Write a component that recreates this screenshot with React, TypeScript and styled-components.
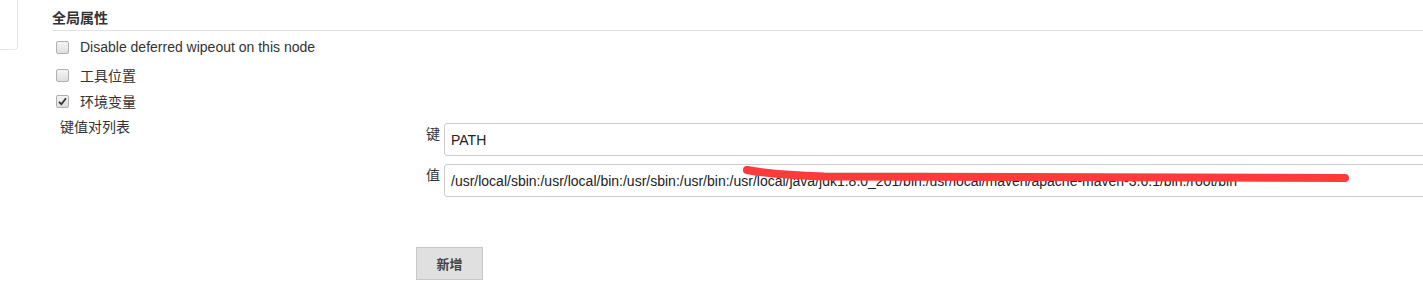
import styled, { createGlobalStyle } from "styled-components";

const GlobalStyle = createGlobalStyle`
  body {
    margin: 0;
    overflow: hidden;
    background: #fff;
    color: #333;
    font-family: "Liberation Sans", Arial, "Noto Sans CJK SC", sans-serif;
    font-size: 13px;
  }
`;

const Page = styled.div`
  display: flex;
  width: 1480px;
`;

const SideStub = styled.div`
  flex-shrink: 0;
  width: 18px;
  height: 49px;
  margin-left: -1px;
  margin-right: 34px;
  border: 1px solid #e4e4e4;
  border-top: none;
  border-left: none;
  border-bottom-right-radius: 4px;
`;

const Main = styled.div`
  flex: 1;
`;

const SectionHeader = styled.div`
  font-size: 14px;
  font-weight: bold;
  line-height: 20px;
  padding: 8px 0 2px;
  border-bottom: 1px solid #e2e2e2;
  color: #333;
`;

const CheckRow = styled.label<{ $top: number }>`
  display: flex;
  align-items: center;
  height: 26px;
  margin-top: ${(p) => p.$top}px;
  padding-left: 4px;
`;

const Box = styled.span`
  display: inline-flex;
  align-items: center;
  justify-content: center;
  width: 11px;
  height: 11px;
  margin-right: 11px;
  border: 1px solid #b0b0b0;
  border-radius: 2px;
  background: linear-gradient(#f4f4f4, #dedede);
`;

const CheckLabel = styled.span`
  font-size: 14px;
  color: #333;
`;

const KvSection = styled.div`
  display: grid;
  grid-template-columns: 364px 1fr;
`;

const KvTitle = styled.div`
  font-size: 14px;
  line-height: 20px;
  padding: 3px 0 0 8px;
`;

const KvBody = styled.div`
  padding-top: 9px;
`;

const KvRow = styled.div<{ $gap: number }>`
  display: grid;
  grid-template-columns: 28px 1fr;
  margin-top: ${(p) => p.$gap}px;
`;

const KvLabel = styled.div`
  font-size: 14px;
  line-height: 20px;
  padding: 1px 0 0 10px;
`;

const Field = styled.div`
  position: relative;
`;

const TextInput = styled.input`
  box-sizing: border-box;
  width: 100%;
  height: 33px;
  padding: 0 6px;
  border: 1px solid #ccc;
  border-radius: 3px;
  font-family: "Liberation Sans", Arial, sans-serif;
  font-size: 14px;
  color: #222;
  background: #fff;
  outline: none;
`;

const Scribble = styled.svg`
  position: absolute;
  left: 0;
  top: 0;
  overflow: visible;
  pointer-events: none;
`;

const AddButton = styled.button`
  margin-top: 50px;
  width: 67px;
  height: 33px;
  border: 1px solid #c8c8c8;
  background: #e0e0e0;
  color: #444;
  font-family: "Liberation Sans", Arial, "Noto Sans CJK SC", sans-serif;
  font-size: 13px;
  font-weight: 600;
  cursor: pointer;
`;

function Checkbox({ checked }: { checked?: boolean }) {
  return (
    <Box>
      {checked && (
        <svg width="9" height="9" viewBox="0 0 9 9">
          <path d="M1 4.8 L3.4 7.2 L8 1.2" fill="none" stroke="#333" strokeWidth="1.8" />
        </svg>
      )}
    </Box>
  );
}

const pathValue =
  "/usr/local/sbin:/usr/local/bin:/usr/sbin:/usr/bin:/usr/local/java/jdk1.8.0_201/bin:/usr/local/maven/apache-maven-3.6.1/bin:/root/bin";

export default function App() {
  return (
    <>
      <GlobalStyle />
      <Page>
        <SideStub />
        <Main>
          <SectionHeader>全局属性</SectionHeader>
          <CheckRow $top={3}>
            <Checkbox />
            <CheckLabel>Disable deferred wipeout on this node</CheckLabel>
          </CheckRow>
          <CheckRow $top={2}>
            <Checkbox />
            <CheckLabel>工具位置</CheckLabel>
          </CheckRow>
          <CheckRow $top={0}>
            <Checkbox checked />
            <CheckLabel>环境变量</CheckLabel>
          </CheckRow>
          <KvSection>
            <KvTitle>键值对列表</KvTitle>
            <KvBody>
              <KvRow $gap={0}>
                <KvLabel>键</KvLabel>
                <Field>
                  <TextInput defaultValue="PATH" />
                </Field>
              </KvRow>
              <KvRow $gap={8}>
                <KvLabel>值</KvLabel>
                <Field>
                  <TextInput defaultValue={pathValue} />
                  <Scribble width="920" height="30">
                    <path
                      d="M303 6 Q330 11 380 12.5 L901 14"
                      fill="none"
                      stroke="#ff3a3a"
                      strokeWidth="8"
                      strokeLinecap="round"
                    />
                  </Scribble>
                </Field>
              </KvRow>
              <AddButton>新增</AddButton>
            </KvBody>
          </KvSection>
        </Main>
      </Page>
    </>
  );
}
